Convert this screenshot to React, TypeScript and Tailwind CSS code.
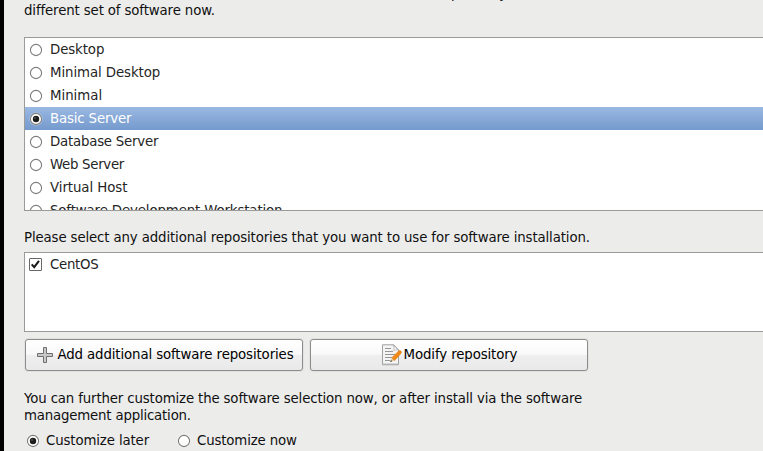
import React from "react";

const packages = [
  { name: "Desktop", track: "tracking-[-0.1px]" },
  { name: "Minimal Desktop", track: "tracking-[-0.08px]" },
  { name: "Minimal", track: "tracking-[-0.02px]" },
  { name: "Basic Server", track: "tracking-[-0.15px]" },
  { name: "Database Server", track: "tracking-[-0.22px]" },
  { name: "Web Server", track: "tracking-[-0.3px]" },
  { name: "Virtual Host", track: "tracking-[-0.07px]" },
  { name: "Software Development Workstation", track: "tracking-[-0.13px]" },
];

function Radio({ checked = false }: { checked?: boolean }) {
  return (
    <svg width="14" height="14" viewBox="0 0 14 14" className="shrink-0">
      <circle cx="7" cy="7" r="6.5" fill="#fff" fillOpacity=".6" />
      <circle cx="7" cy="7" r="5.6" fill="#fff" stroke="#7c7c7c" strokeWidth="1.1" />
      {checked && <circle cx="7" cy="7" r="3.2" fill="#1c1c1c" />}
      {checked && <circle cx="6" cy="6" r="0.8" fill="#777" />}
    </svg>
  );
}

function PlusIcon() {
  return (
    <svg width="16" height="16" viewBox="0 0 16 16" className="shrink-0">
      <path
        d="M6.5 .5h3v6h6v3h-6v6h-3v-6h-6v-3h6z"
        fill="#c9c9c9"
        stroke="#6f6f6f"
      />
    </svg>
  );
}

function EditIcon() {
  return (
    <svg width="21" height="22" viewBox="0 0 21 22" className="shrink-0">
      <path d="M1 20.8h17" stroke="#c7c7c7" strokeWidth="1.4" />
      <path d="M1.5 .8h11.3l4.7 5v14.4h-16z" fill="#f4f4f4" stroke="#a0a0a0" />
      <path d="M12.2 1q1.6 3 .6 5.4 2.4-1.2 4.4-.4z" fill="#fff" stroke="#b4b4b4" strokeWidth=".8" />
      <path
        d="M4 4.5h6M4 7.5h8M4 10.5h10M4 13.5h7M4 16.5h5"
        stroke="#969696"
      />
      <path d="M9.4 17.8l1.4-4.2 3 3z" fill="#e3c99a" />
      <path d="M9.2 18l.7-2 1.4 1.3z" fill="#333" />
      <path d="M10.8 13.8l6.9-6.9q1.1-.9 2.2.1t.3 2.3l-6.6 7.3z" fill="#f08a14" stroke="#dc7b0c" strokeWidth=".5" />
    </svg>
  );
}

const buttonClass =
  "flex h-8 w-[278px] items-center justify-center rounded-[3px] border border-[#8c8c8c] bg-[linear-gradient(#ffffff_0%,#f9f9f9_48%,#efefef_50%,#e9e9e9_100%)] shadow-[0_0_0_1px_#e2e2e1]";

export default function App() {
  return (
    <div className="h-[451px] w-[763px] overflow-hidden border-l-4 border-black bg-[#ececeb] pl-5 font-['DejaVu_Sans',sans-serif] text-[13.333px] leading-[17px] text-[#101010]">
      <div className="-mt-[15px] whitespace-nowrap">
        <p className="tracking-[-0.14px]">
          The default installation of CentOS is a minimum install. You can optionally select a
        </p>
        <p className="tracking-[-0.13px]">different set of software now.</p>
      </div>

      <div className="mt-[18px] h-[174px] w-[760px] overflow-hidden border border-[#9b9b99] bg-white text-[#252525]">
        {packages.map(({ name, track }) => {
          const selected = name === "Basic Server";
          return (
            <div
              key={name}
              className={`flex h-[23px] items-center whitespace-nowrap pl-1 ${
                selected ? "bg-linear-to-b from-[#9ab8e2] to-[#759acd] text-white" : ""
              }`}
            >
              <span className="pt-px">
                <Radio checked={selected} />
              </span>
              <span className={`ml-[7px] ${track}`}>{name}</span>
            </div>
          );
        })}
      </div>

      <p className="mt-[18px] whitespace-nowrap tracking-[-0.13px]">
        Please select any additional repositories that you want to use for software installation.
      </p>

      <div className="mt-[6px] h-[80px] w-[760px] border border-[#9b9b99] bg-white text-[#252525]">
        <div className="flex h-[23px] items-center pl-1">
          <svg width="13" height="13" viewBox="0 0 13 13" className="shrink-0">
            <rect x=".5" y=".5" width="12" height="12" rx=".5" fill="#fff" stroke="#666" />
            <path d="M2.7 6.4l2.5 2.8L10 2.8" fill="none" stroke="#1a1a1a" strokeWidth="2" />
          </svg>
          <span className="ml-2 tracking-[-0.3px]">CentOS</span>
        </div>
      </div>

      <div className="mt-[7px] flex gap-[7px] pl-px text-black">
        <button className={buttonClass}>
          <span className="ml-[2px]">
            <PlusIcon />
          </span>
          <span className="-mt-[2px] ml-[5px] whitespace-nowrap tracking-[-0.12px]">
            Add additional software repositories
          </span>
        </button>
        <button className={buttonClass}>
          <EditIcon />
          <span className="-mt-[2px] ml-[2px] whitespace-nowrap tracking-[-0.12px]">Modify repository</span>
        </button>
      </div>

      <div className="mt-[19px] whitespace-nowrap tracking-[-0.145px]">
        <p>You can further customize the software selection now, or after install via the software</p>
        <p className="tracking-[-0.19px]">management application.</p>
      </div>

      <div className="mt-2 flex whitespace-nowrap pl-[2px] tracking-[-0.13px]">
        <div className="flex w-[151px] items-center">
          <Radio checked />
          <span className="ml-[6px]">Customize later</span>
        </div>
        <div className="flex items-center">
          <Radio />
          <span className="ml-[6px] tracking-[-0.15px]">Customize now</span>
        </div>
      </div>
    </div>
  );
}
